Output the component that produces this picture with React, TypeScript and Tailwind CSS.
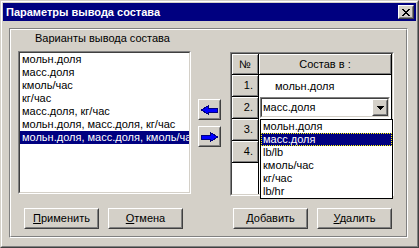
import React from "react";

const raised =
  "border border-t-white border-l-white border-r-[#404040] border-b-[#404040]";
const raisedInner =
  "border border-t-[#d4d0c8] border-l-[#d4d0c8] border-r-[#808080] border-b-[#808080]";
const sunken =
  "border border-t-[#808080] border-l-[#808080] border-r-white border-b-white";
const sunkenInner =
  "border border-t-[#404040] border-l-[#404040] border-r-[#d4d0c8] border-b-[#d4d0c8]";

function Btn({ w, h, children }: { w: string; h: string; children: React.ReactNode }) {
  return (
    <div className={`${w} ${h} bg-[#d4d0c8] ${raised}`}>
      <div className={`w-full h-full ${raisedInner} flex items-center justify-center`}>
        {children}
      </div>
    </div>
  );
}

function LeftArrow() {
  return (
    <svg width="17" height="10" viewBox="0 0 17 10" shapeRendering="crispEdges">
      <path
        d="M0.5 5 L7.5 0.5 L7.5 3 L16.5 3 L16.5 7 L7.5 7 L7.5 9.5 Z"
        fill="#0000ff"
        stroke="#000080"
        strokeWidth="1"
      />
    </svg>
  );
}

function RightArrow() {
  return (
    <svg width="17" height="10" viewBox="0 0 17 10" shapeRendering="crispEdges">
      <path
        d="M16.5 5 L9.5 0.5 L9.5 3 L0.5 3 L0.5 7 L9.5 7 L9.5 9.5 Z"
        fill="#0000ff"
        stroke="#000080"
        strokeWidth="1"
      />
    </svg>
  );
}

const listItems = [
  "мольн.доля",
  "масс.доля",
  "кмоль/час",
  "кг/час",
  "масс.доля, кг/час",
  "мольн.доля, масс.доля, кг/час",
  "мольн.доля, масс.доля, кмоль/час",
];

const dropItems = ["мольн.доля", "масс.доля", "lb/lb", "кмоль/час", "кг/час", "lb/hr"];

const fixedCell =
  "bg-[#d4d0c8] shadow-[inset_1px_1px_0_#ffffff,inset_-1px_-1px_0_#808080] border-r border-b border-black";

export default function App() {
  return (
    <div className="w-[419px] h-[248px] bg-[#d4d0c8] text-[11px] leading-[13px] text-black font-['Liberation_Sans',Arial,sans-serif] overflow-hidden">
      <div className="w-full h-full border border-t-[#d4d0c8] border-l-[#d4d0c8] border-r-[#404040] border-b-[#404040]">
        <div className="w-full h-full border border-t-white border-l-white border-r-[#808080] border-b-[#808080] p-px flex flex-col">
          {/* Title bar */}
          <div className="h-[18px] bg-[#000080] flex items-center justify-between pl-[3px] pr-[2px] shrink-0">
            <span className="text-white font-bold text-[11px] whitespace-nowrap">
              Параметры вывода состава
            </span>
            <Btn w="w-[16px]" h="h-[14px]">
              <svg width="8" height="7" viewBox="0 0 8 7" shapeRendering="crispEdges">
                <path d="M0 0h2v1h-2zM6 0h2v1h-2zM1 1h2v1h-2zM5 1h2v1h-2zM2 2h4v1h-4zM3 3h2v1h-2zM2 4h4v1h-4zM1 5h2v1h-2zM5 5h2v1h-2zM0 6h2v1h-2zM6 6h2v1h-2z" fill="#000" />
              </svg>
            </Btn>
          </div>

          {/* Panel */}
          <div className="ml-[6px] mt-[7px] w-[399px] h-[210px] border border-t-[#808080] border-l-[#808080] border-r-white border-b-white">
            <div className="w-full h-full border border-t-white border-l-white border-r-[#808080] border-b-[#808080] flex flex-col">
              <div className="h-[166px] flex items-start shrink-0">
                {/* Left column */}
                <div className="ml-[7px] flex flex-col">
                  <div className="mt-[2px] h-[13px] pl-[17px] whitespace-nowrap">
                    Варианты вывода состава
                  </div>
                  <div className={`mt-[6px] w-[173px] h-[143px] ${sunken}`}>
                    <div className={`w-full h-full bg-white ${sunkenInner} overflow-hidden`}>
                      {listItems.map((t, i) => (
                        <div
                          key={i}
                          className={`h-[13px] pl-[2px] whitespace-nowrap ${
                            i === 6 ? "bg-[#000080] text-white" : ""
                          }`}
                        >
                          {t}
                        </div>
                      ))}
                    </div>
                  </div>
                </div>

                {/* Arrow buttons */}
                <div className="ml-[7px] mt-[69px] flex flex-col gap-[6px]">
                  <Btn w="w-[23px]" h="h-[21px]">
                    <LeftArrow />
                  </Btn>
                  <Btn w="w-[23px]" h="h-[21px]">
                    <RightArrow />
                  </Btn>
                </div>

                {/* Grid */}
                <div className={`ml-[9px] mt-[22px] w-[164px] h-[144px] ${sunken}`}>
                  <div className={`w-full h-full bg-white ${sunkenInner} flex flex-col`}>
                    <div className="flex h-[21px] shrink-0">
                      <div className={`w-[27px] h-full ${fixedCell} flex items-center justify-center`}>
                        №
                      </div>
                      <div className={`w-[133px] h-full ${fixedCell} flex items-center justify-center`}>
                        Состав в :
                      </div>
                    </div>
                    <div className="flex h-[22px] shrink-0">
                      <div className={`w-[27px] h-full ${fixedCell} flex items-center justify-end pr-[5px]`}>
                        1.
                      </div>
                      <div className="w-[133px] h-full bg-white border-r border-black flex items-center pl-[16px]">
                        мольн.доля
                      </div>
                    </div>
                    <div className="flex h-[22px] shrink-0">
                      <div className={`w-[27px] h-full ${fixedCell} flex items-center justify-end pr-[5px]`}>
                        2.
                      </div>
                      <div className="w-[133px] h-full bg-white border-r border-black relative">
                        {/* Combobox */}
                        <div className={`ml-px w-[130px] h-[21px] ${sunken} relative`}>
                          <div className={`w-full h-full bg-white ${sunkenInner} flex items-center`}>
                            <div className="flex-1 pl-[1px] whitespace-nowrap">масс.доля</div>
                            <div className={`w-[16px] h-full bg-[#d4d0c8] ${raised}`}>
                              <div className={`w-full h-full ${raisedInner} flex items-center justify-center`}>
                                <svg width="7" height="4" viewBox="0 0 7 4" shapeRendering="crispEdges">
                                  <path d="M0 0h7v1h-7zM1 1h5v1h-5zM2 2h3v1h-3zM3 3h1v1h-1z" fill="#000" />
                                </svg>
                              </div>
                            </div>
                          </div>
                          {/* Dropdown list */}
                          <div className="absolute left-[-1px] top-[21px] w-[133px] h-[80px] bg-white border border-black z-10">
                            {dropItems.map((t, i) => (
                              <div
                                key={i}
                                className={`h-[13px] pl-[2px] whitespace-nowrap ${
                                  i === 1
                                    ? "bg-[#000080] text-white outline outline-1 outline-dotted outline-[#ffff00] -outline-offset-1"
                                    : ""
                                }`}
                              >
                                {t}
                              </div>
                            ))}
                          </div>
                        </div>
                      </div>
                    </div>
                    <div className="flex h-[22px] shrink-0">
                      <div className={`w-[27px] h-full ${fixedCell} flex items-center justify-end pr-[5px]`}>
                        3.
                      </div>
                      <div className="w-[133px] h-full bg-white border-r border-black" />
                    </div>
                    <div className="flex h-[22px] shrink-0">
                      <div className={`w-[27px] h-full ${fixedCell} flex items-center justify-end pr-[5px]`}>
                        4.
                      </div>
                      <div className="w-[133px] h-full bg-white border-r border-black" />
                    </div>
                    <div className="flex flex-1">
                      <div className="w-[27px] h-full bg-white border-r border-black" />
                      <div className="w-[133px] h-full bg-white border-r border-black" />
                    </div>
                  </div>
                </div>
              </div>

              {/* Bottom buttons */}
              <div className="mt-[12px] pl-[13px] flex">
                <Btn w="w-[75px]" h="h-[21px]">
                  <span><u>П</u>рименить</span>
                </Btn>
                <div className="ml-[9px]">
                  <Btn w="w-[75px]" h="h-[21px]">
                    <span><u>О</u>тмена</span>
                  </Btn>
                </div>
                <div className="ml-[50px]">
                  <Btn w="w-[75px]" h="h-[21px]">
                    <span><u>Д</u>обавить</span>
                  </Btn>
                </div>
                <div className="ml-[9px]">
                  <Btn w="w-[75px]" h="h-[21px]">
                    <span><u>У</u>далить</span>
                  </Btn>
                </div>
              </div>
            </div>
          </div>
        </div>
      </div>
    </div>
  );
}
